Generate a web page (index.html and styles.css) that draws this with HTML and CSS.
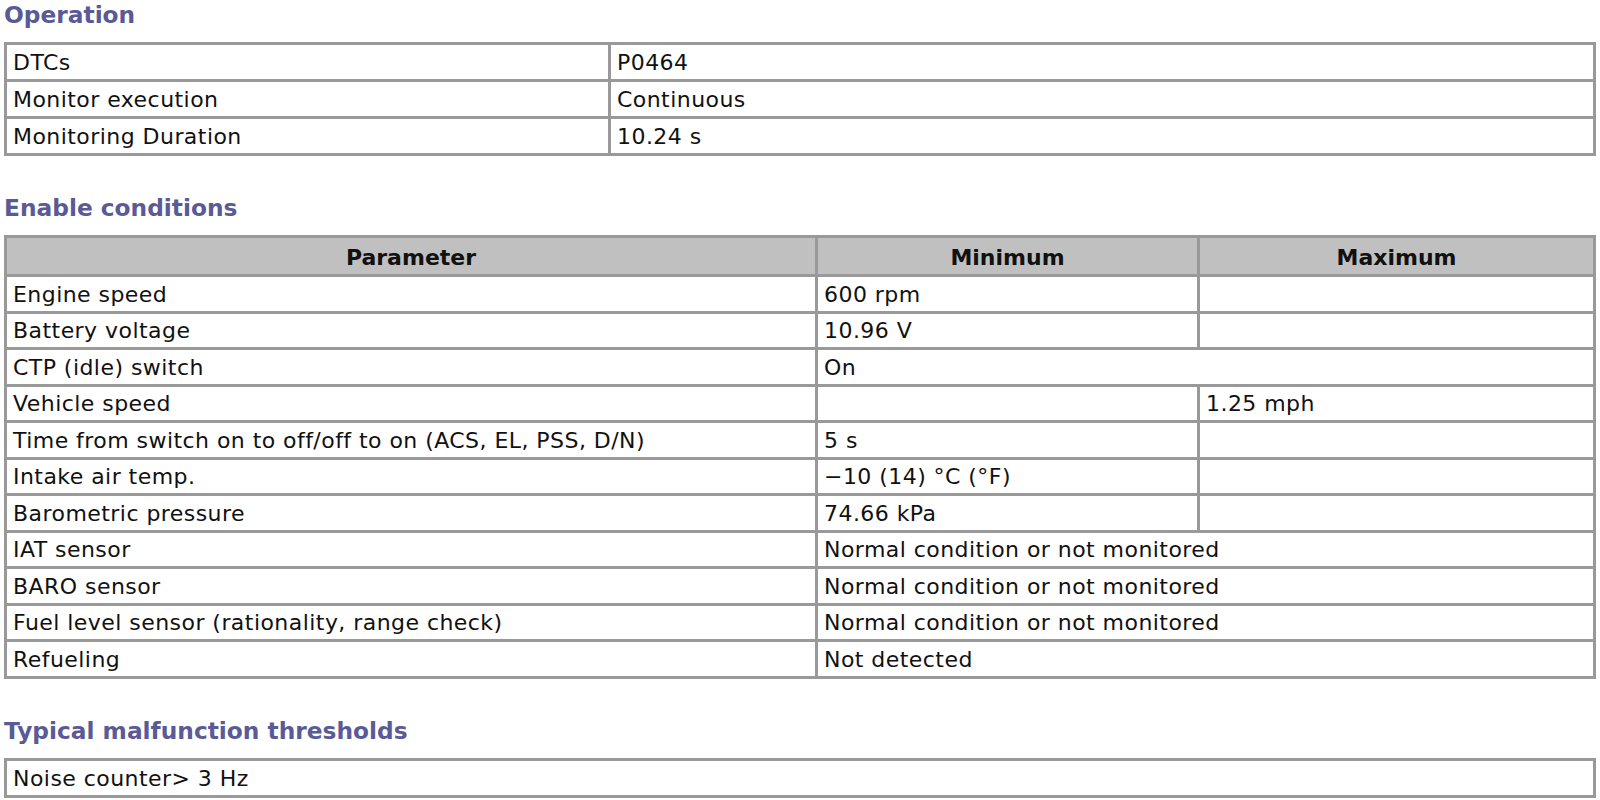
FILE: index.html
```html
<!DOCTYPE html>
<html lang="en">
<head>
<meta charset="utf-8">
<title>P0464 Operation</title>
<link rel="stylesheet" href="styles.css">
</head>
<body>
  <h2 class="section first">Operation</h2>
  <table class="grid">
    <tbody>
      <tr><td class="op-c1">DTCs</td><td>P0464</td></tr>
      <tr><td>Monitor execution</td><td>Continuous</td></tr>
      <tr><td>Monitoring Duration</td><td>10.24 s</td></tr>
    </tbody>
  </table>

  <h2 class="section">Enable conditions</h2>
  <table class="grid cond">
    <thead>
      <tr><th class="en-c1">Parameter</th><th class="en-c2">Minimum</th><th>Maximum</th></tr>
    </thead>
    <tbody>
      <tr><td>Engine speed</td><td>600 rpm</td><td></td></tr>
      <tr><td>Battery voltage</td><td>10.96 V</td><td></td></tr>
      <tr><td>CTP (idle) switch</td><td colspan="2">On</td></tr>
      <tr><td>Vehicle speed</td><td></td><td>1.25 mph</td></tr>
      <tr><td>Time from switch on to off/off to on (ACS, EL, PSS, D/N)</td><td>5 s</td><td></td></tr>
      <tr><td>Intake air temp.</td><td>&minus;10 (14) °C (°F)</td><td></td></tr>
      <tr><td>Barometric pressure</td><td>74.66 kPa</td><td></td></tr>
      <tr><td>IAT sensor</td><td colspan="2">Normal condition or not monitored</td></tr>
      <tr><td>BARO sensor</td><td colspan="2">Normal condition or not monitored</td></tr>
      <tr><td>Fuel level sensor (rationality, range check)</td><td colspan="2">Normal condition or not monitored</td></tr>
      <tr><td>Refueling</td><td colspan="2">Not detected</td></tr>
    </tbody>
  </table>

  <h2 class="section">Typical malfunction thresholds</h2>
  <table class="grid">
    <tbody>
      <tr><td>Noise counter&gt; 3 Hz</td></tr>
    </tbody>
  </table>
</body>
</html>
```
FILE: styles.css
```css
html, body {
  margin: 0;
  padding: 0;
  background: #ffffff;
}

body {
  padding: 0 4px;
  font-family: "DejaVu Sans", Verdana, sans-serif;
  font-size: 22px;
  letter-spacing: 0.45px;
  color: #111111;
}

.section {
  margin: 38px 0 13px;
  font-size: 23.3px;
  line-height: 28px;
  letter-spacing: 0;
  font-weight: bold;
  color: #5a5a96;
}

.section.first {
  margin-top: 1px;
}

.grid {
  width: 100%;
  table-layout: fixed;
  border-collapse: separate;
  border-spacing: 0;
  border: 3px solid #999999;
}

.grid td,
.grid th {
  box-sizing: border-box;
  padding: 1px 6px 0;
  height: 34px;
  line-height: 33px;
  text-align: left;
  vertical-align: middle;
  white-space: nowrap;
  border-left: 3px solid #999999;
  border-top: 3px solid #999999;
}

.grid td:first-child,
.grid th:first-child {
  border-left: 0;
}

.grid tr:first-child > td,
.grid tr:first-child > th {
  border-top: 0;
}

.grid th {
  height: 36px;
  padding-top: 3px;
  text-align: center;
  font-weight: bold;
  background: #c0c0c0;
  color: #111111;
  letter-spacing: 0;
}

.cond tbody tr:nth-child(even) > td {
  height: 33px;
  line-height: 32px;
}

.cond tbody tr:first-child > td {
  border-top: 3px solid #999999;
}

.op-c1 {
  width: 601px;
}

.en-c1 {
  width: 808px;
}

.en-c2 {
  width: 382px;
}
```
